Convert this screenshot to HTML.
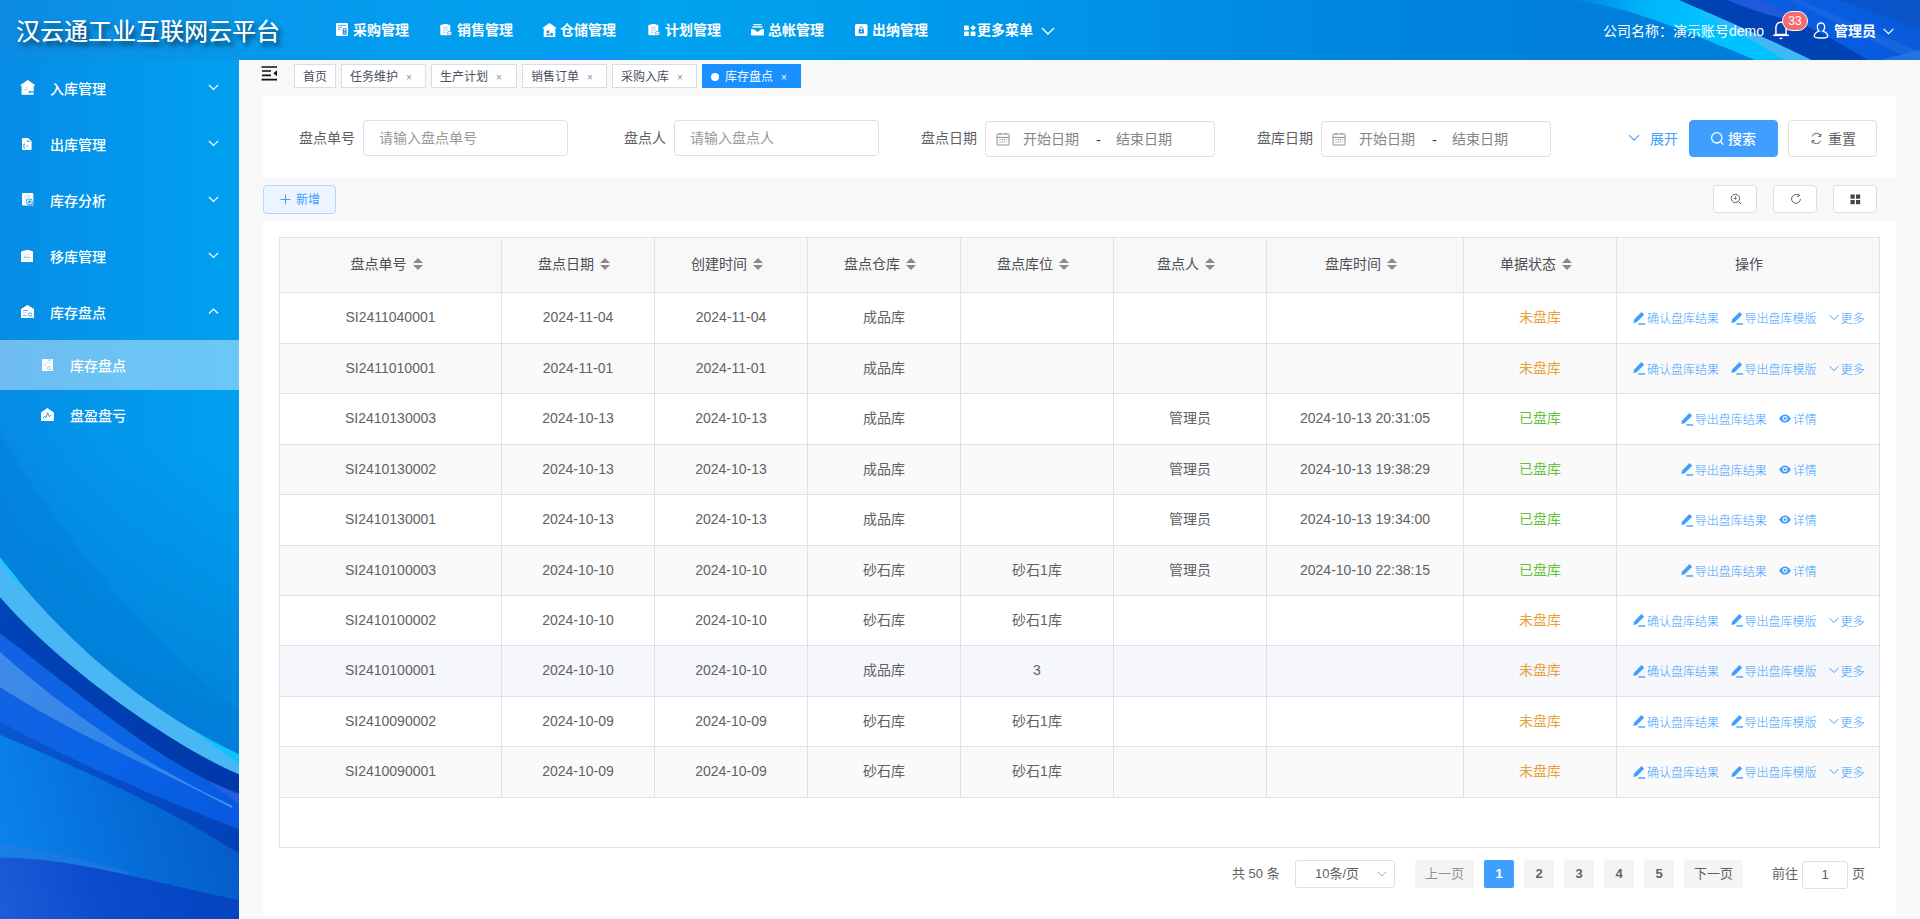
<!DOCTYPE html>
<html lang="zh-CN">
<head>
<meta charset="utf-8">
<title>汉云通工业互联网云平台</title>
<style>
*{box-sizing:border-box;margin:0;padding:0}
html,body{width:1920px;height:919px;overflow:hidden;background:#f8f8f8;font-family:"Liberation Sans","Noto Sans CJK SC",sans-serif;font-size:14px;color:#606266}
.abs{position:absolute}
svg{display:block}
/* header */
#hdr{position:absolute;left:0;top:0;width:1920px;height:60px;overflow:hidden;color:#fff}
#hdr .bg{position:absolute;left:0;top:0;width:1920px;height:60px}
#title{position:absolute;left:16px;top:0;height:60px;line-height:64px;font-size:24px;font-weight:400;color:#fff;text-shadow:3px 4px 5px rgba(0,0,0,.62), 0 0 0.6px #fff;white-space:nowrap}
.nav{position:absolute;top:0;height:60px;line-height:60px;font-size:14px;font-weight:bold;color:#fff;white-space:nowrap}
.nav svg{position:absolute;top:24px;left:0}
.nav span{position:absolute;left:17px;top:0}
/* sidebar */
#side{position:absolute;left:0;top:60px;width:239px;height:859px;overflow:hidden;color:#fff}
#side .bg{position:absolute;left:0;top:0;width:239px;height:859px}
.mi{position:absolute;left:0;width:239px;height:56px;line-height:58px;font-size:14px;font-weight:500;color:#fff}
.mi .t{position:absolute;left:50px;top:0;white-space:nowrap}
.mi .ic{position:absolute;left:20px;top:20px}
.mi .ar{position:absolute;left:208px;top:23.5px}
.smi{position:absolute;left:0;width:239px;height:50px;line-height:52px;font-size:14px;font-weight:500;color:#fff}
.smi .t{position:absolute;left:70px;top:0;white-space:nowrap}
.smi .ic{position:absolute;left:40px;top:17px}
/* tabs */
.tab{position:absolute;top:64px;height:24px;line-height:25px;border:1px solid #d8dce5;background:#fff;color:#495060;font-size:12px;padding:0 8px;white-space:nowrap}
.tab .x{display:inline-block;width:16px;margin-left:3px;text-align:center;font-size:10px;color:#8a8f99;position:relative;top:-0.5px}
.tab.on{background:#1890ff;border-color:#1890ff;color:#fff}
.tab.on .x{color:#fff}
.tab.on:before{content:"";display:inline-block;width:8px;height:8px;border-radius:50%;background:#fff;margin-right:6px;position:relative;top:0}
/* panels */
.panel{position:absolute;background:#fff}
.lbl{position:absolute;top:120px;height:36px;line-height:37px;font-size:14px;font-weight:400;color:#5c5e62;white-space:nowrap}
.inp{position:absolute;top:120px;height:36px;border:1px solid #dcdfe6;border-radius:4px;background:#fff;line-height:34px;font-size:14px;color:#999;padding-left:15px;white-space:nowrap}
.dr{position:absolute;top:121px;height:36px;width:230px;border:1px solid #dcdfe6;border-radius:4px;background:#fff;line-height:34px;font-size:14px;color:#858585;white-space:nowrap}
.dr span{position:absolute;top:0}
.btn{position:absolute;border-radius:4px;border:1px solid #dcdfe6;background:#fff;white-space:nowrap}
/* table */
#tb{position:absolute;left:279px;top:237px;width:1601px;height:611px;border:1px solid #dfe0e9;background:#fff}
.hr{position:absolute;left:0;top:0;width:1599px;height:55px;background:#f8f8f9;border-bottom:1px solid #dfe0e9}
.row{position:absolute;left:0;width:1599px;border-bottom:1px solid #dfe0e9}
.c{position:absolute;top:0;height:100%;border-right:1px solid #dfe0e9;text-align:center;font-size:14px;color:#606266;white-space:nowrap;display:flex;align-items:center;justify-content:center}
.c:last-child{border-right:none}
.row .c{padding-bottom:2px}
.row .c:last-child{padding-bottom:1px}
.row .c.z{padding-bottom:4px}
.hr .c{font-weight:400;color:#4c4e52;font-size:14px;padding-bottom:4px}
.st{display:inline-block;width:24px;height:14px;position:relative;top:2px;left:-1px}
.st:before{content:"";position:absolute;left:7px;top:0;border:5px solid transparent;border-bottom-color:#8a8a8a;border-top-width:0;border-bottom-width:5px}
.st:after{content:"";position:absolute;left:7px;top:7px;border:5px solid transparent;border-top-color:#8a8a8a;border-bottom-width:0;border-top-width:5px}
.a{color:#409eff;font-size:12px;font-weight:300;display:inline-flex;align-items:center}
.a svg{margin-right:2px}
.a+.a{margin-left:12px}
.s0{color:#e6a23c}.s1{color:#67c23a}
/* pagination */
.pg{position:absolute;top:860px;height:28px;line-height:28px;font-size:13px;color:#606266;white-space:nowrap;text-align:center}
.pb{background:#f4f4f5;border-radius:2px;font-weight:bold;width:30px}
</style>
</head>
<body>
<div id="hdr"><svg class="bg" viewBox="0 0 1920 60" preserveAspectRatio="none" width="1920" height="60">
<defs>
<linearGradient id="hg" x1="0" y1="0" x2="1920" y2="0" gradientUnits="userSpaceOnUse">
<stop offset="0" stop-color="#0c8ae3"/><stop offset="0.06" stop-color="#0a92e8"/><stop offset="0.2" stop-color="#049cee"/><stop offset="0.36" stop-color="#00a2ef"/><stop offset="0.5" stop-color="#0099eb"/><stop offset="0.66" stop-color="#008ae2"/><stop offset="0.8" stop-color="#0080dc"/><stop offset="1" stop-color="#007cd9"/>
</linearGradient>
<linearGradient id="hc" x1="1575" y1="0" x2="1700" y2="28" gradientUnits="userSpaceOnUse">
<stop offset="0" stop-color="#00b0f8" stop-opacity="0.15"/><stop offset="0.5" stop-color="#00bcfe" stop-opacity="0.85"/><stop offset="1" stop-color="#00c2ff"/>
</linearGradient>
<linearGradient id="hl" x1="1700" y1="12" x2="1750" y2="35" gradientUnits="userSpaceOnUse"><stop offset="0" stop-color="#10c0ff"/><stop offset="1" stop-color="#40b8f8"/></linearGradient>
<linearGradient id="hb" x1="1760" y1="0" x2="1920" y2="0" gradientUnits="userSpaceOnUse">
<stop offset="0" stop-color="#0a5ee2"/><stop offset="0.6" stop-color="#075ce0"/><stop offset="1" stop-color="#0a5ad8"/>
</linearGradient>
</defs>
<rect width="1920" height="60" fill="url(#hg)"/>
<path d="M1574.4,0.0 L1581.9,1.1 L1589.5,2.4 L1597.0,3.8 L1604.5,5.5 L1612.0,7.3 L1619.6,9.2 L1627.1,11.3 L1634.6,13.6 L1642.1,15.9 L1649.7,18.4 L1657.2,21.0 L1664.7,23.7 L1672.2,26.5 L1679.8,29.4 L1687.3,32.3 L1694.8,35.3 L1702.3,38.3 L1709.8,41.3 L1717.4,44.4 L1724.9,47.5 L1732.4,50.6 L1740.0,53.7 L1747.5,56.8 L1755.0,59.9 L1811.0,59.7 L1805.5,57.0 L1800.0,54.3 L1794.4,51.7 L1788.9,49.0 L1783.4,46.4 L1777.9,43.8 L1772.4,41.3 L1766.8,38.7 L1761.3,36.2 L1755.8,33.7 L1750.3,31.2 L1744.8,28.7 L1739.2,26.2 L1733.7,23.8 L1728.2,21.3 L1722.7,18.9 L1717.1,16.5 L1711.6,14.1 L1706.1,11.7 L1700.6,9.3 L1695.1,6.9 L1689.5,4.5 L1684.0,2.1 L1678.5,-0.2 Z" fill="url(#hc)"/>
<path d="M1700.0,15.5 L1703.5,16.9 L1707.0,18.4 L1710.5,19.9 L1714.0,21.4 L1717.5,23.0 L1721.0,24.6 L1724.5,26.3 L1728.0,28.0 L1731.5,29.7 L1735.0,31.5 L1738.5,33.3 L1742.0,35.1 L1745.5,37.0 L1749.0,38.9 L1752.5,40.8 L1756.0,42.8 L1759.5,44.8 L1763.0,46.8 L1766.5,48.9 L1770.0,51.0 L1773.5,53.2 L1777.0,55.4 L1780.5,57.6 L1784.0,59.8 L1811.0,59.7 L1805.5,57.0 L1800.0,54.3 L1794.4,51.7 L1788.9,49.0 L1783.4,46.4 L1777.9,43.8 L1772.4,41.3 L1766.8,38.7 L1761.3,36.2 L1755.8,33.7 L1750.3,31.2 L1744.8,28.7 L1739.2,26.2 L1733.7,23.8 L1728.2,21.3 L1722.7,18.9 L1717.1,16.5 L1711.6,14.1 L1706.1,11.7 L1700.6,9.3 Z" fill="url(#hl)"/>
<path d="M1678.5,-0.2 L1684.0,2.1 L1689.5,4.5 L1695.1,6.9 L1700.6,9.3 L1706.1,11.7 L1711.6,14.1 L1717.1,16.5 L1722.7,18.9 L1728.2,21.3 L1733.7,23.8 L1739.2,26.2 L1744.8,28.7 L1750.3,31.2 L1755.8,33.7 L1761.3,36.2 L1766.8,38.7 L1772.4,41.3 L1777.9,43.8 L1783.4,46.4 L1788.9,49.0 L1794.4,51.7 L1800.0,54.3 L1805.5,57.0 L1811.0,59.7 L1920.0,60.0 L1920.0,0.0 Z" fill="#0041b3"/>
<path d="M1727.5,-0.1 L1730.4,1.1 L1733.2,2.3 L1736.1,3.4 L1738.9,4.5 L1741.8,5.6 L1744.6,6.7 L1747.5,7.7 L1750.3,8.7 L1753.2,9.7 L1756.0,10.7 L1758.9,11.6 L1761.8,12.5 L1764.6,13.4 L1767.5,14.2 L1770.3,15.0 L1773.2,15.8 L1776.0,16.6 L1778.9,17.3 L1781.7,18.0 L1784.6,18.7 L1787.4,19.4 L1790.3,20.0 L1793.1,20.6 L1796.0,21.2 L1817.0,31.0 L1840.0,43.8 L1868.0,60.0 L1920.0,60.0 L1920.0,0.0 Z" fill="url(#hb)"/>
<path d="M1727.5,-0.1 L1730.4,1.1 L1733.2,2.3 L1736.1,3.4 L1738.9,4.5 L1741.8,5.6 L1744.6,6.7 L1747.5,7.7 L1750.3,8.7 L1753.2,9.7 L1756.0,10.7 L1758.9,11.6 L1761.8,12.5 L1764.6,13.4 L1767.5,14.2 L1770.3,15.0 L1773.2,15.8 L1776.0,16.6 L1778.9,17.3 L1781.7,18.0 L1784.6,18.7 L1787.4,19.4 L1790.3,20.0 L1793.1,20.6 L1796.0,21.2 L1800.0,18.9 L1798.2,18.0 L1796.5,17.1 L1794.7,16.2 L1793.0,15.3 L1791.2,14.4 L1789.4,13.6 L1787.7,12.8 L1785.9,11.9 L1784.1,11.1 L1782.4,10.3 L1780.6,9.5 L1778.8,8.7 L1777.1,7.9 L1775.3,7.2 L1773.6,6.4 L1771.8,5.6 L1770.0,4.9 L1768.3,4.2 L1766.5,3.5 L1764.8,2.8 L1763.0,2.1 L1761.2,1.4 L1759.5,0.7 L1757.7,0.0 Z" fill="#2059d9"/>
<path d="M1800.0,0.0 L1920.0,52.0 L1920.0,60.0 L1912.0,60.0 L1790.0,0.0 Z" fill="#2a7ae8" opacity="0.35"/>
<path d="M1840.0,0.0 L1920.0,30.0 L1920.0,0.0 Z" fill="#0a52c4" opacity="0.8"/>
<path d="M1880.0,60.0 L1920.0,50.0 L1920.0,60.0 Z" fill="#2a80e8" opacity="0.6"/>
</svg><div id="title">汉云通工业互联网云平台</div><div class="nav" style="left:336px"><svg width="12" height="13" viewBox="0 0 12 12.5" preserveAspectRatio="none" style="top:23px"><rect x="0" y="0" width="12" height="12.5" rx="1.2" fill="#fff"/><rect x="1.75" y="1.9" width="8.2" height="0.7" fill="#1a8fe6"/><rect x="1.75" y="3.75" width="4.4" height="0.7" fill="#1a8fe6"/><rect x="1.75" y="5.6" width="2.6" height="0.7" fill="#1a8fe6"/><rect x="6.75" y="5" width="3.8" height="6.4" rx="0.6" fill="#1a8fe6"/><circle cx="8.65" cy="6.6" r="0.9" fill="#fff"/><rect x="7.9" y="8.4" width="1.5" height="2.2" fill="#8ccaf5"/></svg><span>采购管理</span></div><div class="nav" style="left:440px"><svg width="12" height="11.5" viewBox="0 0 12 11.5" style="top:24px"><rect x="0.3" y="0.7" width="10" height="10.6" rx="1" fill="#fff"/><rect x="3" y="0" width="4.7" height="1.6" rx="0.6" fill="#fff"/><rect x="2.8" y="3.4" width="5.2" height="0.7" fill="#7cc3f4"/><rect x="2.8" y="5.6" width="5.2" height="0.7" fill="#7cc3f4"/><rect x="2.8" y="7.8" width="3.6" height="0.7" fill="#7cc3f4"/><circle cx="9.6" cy="9.3" r="2.4" fill="#0f97ec"/><circle cx="9.6" cy="9.3" r="1.9" fill="#fff"/><rect x="8.6" y="9" width="2" height="0.6" fill="#1a8fe6"/></svg><span>销售管理</span></div><div class="nav" style="left:543px"><svg width="15" height="14" viewBox="0 0 14 12" preserveAspectRatio="none" style="left:-1px;top:22.5px"><path d="M7,0 L14,4.6 L12.4,4.6 L12.4,12 L1.6,12 L1.6,4.6 L0,4.6 Z" fill="#fff"/><rect x="4.2" y="6.4" width="2.6" height="2.2" fill="#1a8fe6"/><rect x="7.6" y="8.6" width="2.6" height="2.2" fill="#1a8fe6"/><rect x="4.2" y="9.3" width="2.6" height="1.5" fill="#1a8fe6"/></svg><span>仓储管理</span></div><div class="nav" style="left:648px"><svg width="12" height="11.5" viewBox="0 0 12 11.5" style="top:24px"><rect x="0.3" y="0.7" width="10" height="10.6" rx="1" fill="#fff"/><rect x="3" y="0" width="4.7" height="1.6" rx="0.6" fill="#fff"/><rect x="2.8" y="3.4" width="5.2" height="0.7" fill="#7cc3f4"/><rect x="2.8" y="5.6" width="5.2" height="0.7" fill="#7cc3f4"/><rect x="2.8" y="7.8" width="3.6" height="0.7" fill="#7cc3f4"/><circle cx="9.6" cy="9.3" r="2.4" fill="#0f97ec"/><circle cx="9.6" cy="9.3" r="1.9" fill="#fff"/><rect x="8.6" y="9" width="2" height="0.6" fill="#1a8fe6"/></svg><span>计划管理</span></div><div class="nav" style="left:751px"><svg width="13" height="11.5" viewBox="0 0 13 11.5" style="top:24px"><rect x="2.4" y="0" width="8.2" height="1.3" fill="#fff"/><rect x="1.4" y="2.3" width="10.2" height="1.4" fill="#fff"/><path d="M0,5.2 L2.8,5.2 L6.5,7.9 L10.2,5.2 L13,5.2 L13,10.7 a0.8,0.8 0 0 1 -0.8,0.8 L0.8,11.5 a0.8,0.8 0 0 1 -0.8,-0.8 Z" fill="#fff"/></svg><span>总帐管理</span></div><div class="nav" style="left:855px"><svg width="12.5" height="12" viewBox="0 0 12.5 12" style="top:23.5px"><rect x="0" y="0" width="12.5" height="12" rx="1.6" fill="#fff"/><path d="M4.6,5.4 V4.5 a1.65,1.65 0 0 1 3.3,0 V5.4" stroke="#1a8fe6" stroke-width="0.9" fill="none"/><rect x="3.6" y="5.2" width="5.3" height="4.2" rx="0.6" fill="#1a8fe6"/><circle cx="6.25" cy="7.3" r="0.8" fill="#fff"/></svg><span>出纳管理</span></div><div class="abs" style="left:538px;top:57px;width:84px;height:3px;background:#1890ff"></div><div class="nav" style="left:964px"><svg width="12" height="11.5" viewBox="0 0 12 11.5" style="top:24.5px"><rect x="0" y="0.4" width="4.8" height="4.8" rx="0.6" fill="#fff"/><path d="M9.1,0 L11.9,2.8 L9.1,5.6 L6.3,2.8 Z" fill="#fff"/><rect x="0" y="6.5" width="4.8" height="4.8" rx="0.6" fill="#fff"/><rect x="6.6" y="6.5" width="4.8" height="4.8" rx="0.6" fill="#fff"/></svg><span style="left:13px">更多菜单</span><svg width="14" height="8" viewBox="0 0 14 8" style="left:77px;top:27px"><path d="M1,1 L7,7 L13,1" stroke="#fff" stroke-width="1.4" fill="none"/></svg></div><div class="abs" style="left:1603px;top:0;height:60px;line-height:62px;font-size:14px;color:#fff;white-space:nowrap">公司名称：演示账号demo</div><svg class="abs" style="left:1772px;top:21px" width="18" height="20" viewBox="0 0 18 20"><path d="M9,1.2 C5.6,1.2 3.9,3.8 3.9,6.8 L3.9,13.6 L14.1,13.6 L14.1,6.8 C14.1,3.8 12.4,1.2 9,1.2 Z" fill="none" stroke="#fff" stroke-width="1.5"/><path d="M1.2,14.3 H16.8" stroke="#fff" stroke-width="1.6"/><path d="M7.6,17.4 H10.4" stroke="#fff" stroke-width="1.4"/></svg><div class="abs" style="left:1782px;top:11px;width:26px;height:20px;border-radius:10px;background:#f56c6c;border:1px solid #fff;color:#fff;font-size:12px;line-height:18px;text-align:center">33</div><svg class="abs" style="left:1813px;top:22px" width="16" height="17" viewBox="0 0 16 17"><path d="M8,1 C5.6,1 4.3,2.9 4.3,5 C4.3,6.8 5,8.3 6.2,9.2 C3.4,10 1.4,11.6 1.2,14.2 C1.2,15.3 3.6,16 8,16 C12.4,16 14.8,15.3 14.8,14.2 C14.6,11.6 12.6,10 9.8,9.2 C11,8.3 11.7,6.8 11.7,5 C11.7,2.9 10.4,1 8,1 Z" fill="none" stroke="#fff" stroke-width="1.3"/></svg><div class="abs" style="left:1834px;top:0;height:60px;line-height:62px;font-size:14px;font-weight:bold;color:#fff;white-space:nowrap">管理员</div><svg class="abs" style="left:1883px;top:28px" width="11" height="7" viewBox="0 0 11 7"><path d="M0.6,0.8 L5.5,5.7 L10.4,0.8" stroke="#fff" stroke-width="1.2" fill="none"/></svg></div>
<div id="side"><svg class="bg" viewBox="0 0 239 859" preserveAspectRatio="none" width="239" height="859">
<defs>
<linearGradient id="sg" x1="0" y1="0" x2="239" y2="0" gradientUnits="userSpaceOnUse">
<stop offset="0" stop-color="#078ce5"/><stop offset="0.4" stop-color="#0396eb"/><stop offset="1" stop-color="#00a0f0"/>
</linearGradient>
<linearGradient id="sv" x1="225" y1="400" x2="165" y2="700" gradientUnits="userSpaceOnUse">
<stop offset="0" stop-color="#0078d2" stop-opacity="0"/><stop offset="0.5" stop-color="#0078d2" stop-opacity="0.4"/><stop offset="1" stop-color="#0078d4" stop-opacity="0.85"/>
</linearGradient>
<linearGradient id="sm" x1="0" y1="580" x2="239" y2="780" gradientUnits="userSpaceOnUse">
<stop offset="0" stop-color="#1262e2"/><stop offset="0.5" stop-color="#0a64e6"/><stop offset="1" stop-color="#0658e0"/>
</linearGradient>
<linearGradient id="ss" x1="0" y1="600" x2="239" y2="745" gradientUnits="userSpaceOnUse"><stop offset="0" stop-color="#3f8ae8"/><stop offset="0.6" stop-color="#2f84e8"/><stop offset="1" stop-color="#4a98f0"/></linearGradient>
<linearGradient id="sk" x1="0" y1="550" x2="239" y2="725" gradientUnits="userSpaceOnUse"><stop offset="0" stop-color="#0044b8"/><stop offset="1" stop-color="#0038aa"/></linearGradient>
<linearGradient id="sd" x1="0" y1="665" x2="239" y2="790" gradientUnits="userSpaceOnUse">
<stop offset="0" stop-color="#0a58ce"/><stop offset="0.5" stop-color="#054cc4"/><stop offset="1" stop-color="#0340b8"/>
</linearGradient>
<linearGradient id="sb" x1="0" y1="760" x2="239" y2="700" gradientUnits="userSpaceOnUse">
<stop offset="0" stop-color="#0a82ea"/><stop offset="0.5" stop-color="#066cd8"/><stop offset="1" stop-color="#0458c4"/>
</linearGradient>
<linearGradient id="sbb" x1="0" y1="859" x2="200" y2="800" gradientUnits="userSpaceOnUse">
<stop offset="0" stop-color="#1e5cd8"/><stop offset="0.5" stop-color="#0a4ccc"/><stop offset="1" stop-color="#0545c2"/>
</linearGradient>
</defs>
<rect width="239" height="859" fill="url(#sg)"/>
<rect width="239" height="859" fill="url(#sv)"/>
<path d="M0,370 C20,410 55,460 89,500 C120,540 160,590 239,650 L239,700 L0,700 Z" fill="#0078d4" opacity="0.28"/>
<path d="M0.0,573.5 L8.0,579.5 L15.9,585.5 L23.9,591.6 L31.9,597.8 L39.8,604.0 L47.8,610.2 L55.8,616.4 L63.7,622.6 L71.7,628.8 L79.7,635.0 L87.6,641.2 L95.6,647.2 L103.6,653.3 L111.5,659.2 L119.5,665.1 L127.5,670.8 L135.4,676.5 L143.4,682.0 L151.4,687.4 L159.3,692.6 L167.3,697.7 L175.3,702.5 L183.2,707.2 L191.2,711.7 L199.2,715.9 L207.1,720.0 L215.1,723.7 L223.1,727.3 L231.0,730.5 L239.0,733.5 L239.0,859.0 L0.0,859.0 Z" fill="url(#sm)"/>
<path d="M0.0,592.0 L7.7,598.8 L15.5,605.5 L23.2,612.0 L30.9,618.4 L38.7,624.7 L46.4,630.9 L54.1,636.9 L61.9,642.8 L69.6,648.6 L77.3,654.3 L85.1,659.8 L92.8,665.3 L100.5,670.6 L108.3,675.8 L116.0,680.9 L123.7,685.9 L131.5,690.8 L139.2,695.6 L146.9,700.3 L154.7,704.9 L162.4,709.4 L170.1,713.8 L177.9,718.1 L185.6,722.3 L193.3,726.4 L201.1,730.4 L208.8,734.4 L216.5,738.2 L224.3,742.0 L232.0,745.7 L232.0,748.1 L224.3,744.0 L216.5,739.9 L208.8,736.0 L201.1,732.0 L193.3,728.2 L185.6,724.3 L177.9,720.5 L170.1,716.8 L162.4,713.0 L154.7,709.3 L146.9,705.6 L139.2,701.9 L131.5,698.2 L123.7,694.5 L116.0,690.7 L108.3,686.9 L100.5,683.1 L92.8,679.3 L85.1,675.4 L77.3,671.4 L69.6,667.4 L61.9,663.3 L54.1,659.1 L46.4,654.8 L38.7,650.5 L30.9,646.0 L23.2,641.5 L15.5,636.8 L7.7,632.0 L0.0,627.0 Z" fill="url(#ss)"/>
<path d="M0.0,674.4 L8.0,677.9 L15.9,681.3 L23.9,684.8 L31.9,688.3 L39.8,691.8 L47.8,695.3 L55.8,698.8 L63.7,702.3 L71.7,705.9 L79.7,709.5 L87.6,713.1 L95.6,716.8 L103.6,720.4 L111.5,724.2 L119.5,728.0 L127.5,731.8 L135.4,735.7 L143.4,739.7 L151.4,743.7 L159.3,747.8 L167.3,752.0 L175.3,756.2 L183.2,760.5 L191.2,765.0 L199.2,769.5 L207.1,774.1 L215.1,778.8 L223.1,783.6 L231.0,788.5 L239.0,793.5 L239.0,859.0 L0.0,859.0 Z" fill="url(#sb)"/>
<path d="M0.0,661.5 L8.0,665.9 L15.9,670.2 L23.9,674.4 L31.9,678.5 L39.8,682.6 L47.8,686.6 L55.8,690.5 L63.7,694.4 L71.7,698.2 L79.7,702.0 L87.6,705.7 L95.6,709.4 L103.6,713.0 L111.5,716.6 L119.5,720.1 L127.5,723.6 L135.4,727.1 L143.4,730.5 L151.4,733.9 L159.3,737.2 L167.3,740.6 L175.3,743.9 L183.2,747.1 L191.2,750.4 L199.2,753.6 L207.1,756.9 L215.1,760.1 L223.1,763.3 L231.0,766.4 L239.0,769.6 L239.0,793.5 L231.0,788.5 L223.1,783.6 L215.1,778.8 L207.1,774.1 L199.2,769.5 L191.2,765.0 L183.2,760.5 L175.3,756.2 L167.3,752.0 L159.3,747.8 L151.4,743.7 L143.4,739.7 L135.4,735.7 L127.5,731.8 L119.5,728.0 L111.5,724.2 L103.6,720.4 L95.6,716.8 L87.6,713.1 L79.7,709.5 L71.7,705.9 L63.7,702.3 L55.8,698.8 L47.8,695.3 L39.8,691.8 L31.9,688.3 L23.9,684.8 L15.9,681.3 L8.0,677.9 L0.0,674.4 Z" fill="url(#sd)"/>
<path d="M0.0,537.2 L8.0,546.0 L15.9,554.5 L23.9,562.6 L31.9,570.4 L39.8,578.0 L47.8,585.3 L55.8,592.4 L63.7,599.3 L71.7,606.0 L79.7,612.6 L87.6,618.9 L95.6,625.2 L103.6,631.2 L111.5,637.2 L119.5,643.0 L127.5,648.7 L135.4,654.3 L143.4,659.7 L151.4,665.1 L159.3,670.3 L167.3,675.4 L175.3,680.3 L183.2,685.2 L191.2,689.9 L199.2,694.4 L207.1,698.7 L215.1,702.9 L223.1,706.9 L231.0,710.7 L239.0,714.2 L239.0,733.5 L231.0,730.5 L223.1,727.3 L215.1,723.7 L207.1,720.0 L199.2,715.9 L191.2,711.7 L183.2,707.2 L175.3,702.5 L167.3,697.7 L159.3,692.6 L151.4,687.4 L143.4,682.0 L135.4,676.5 L127.5,670.8 L119.5,665.1 L111.5,659.2 L103.6,653.3 L95.6,647.2 L87.6,641.2 L79.7,635.0 L71.7,628.8 L63.7,622.6 L55.8,616.4 L47.8,610.2 L39.8,604.0 L31.9,597.8 L23.9,591.6 L15.9,585.5 L8.0,579.5 L0.0,573.5 Z" fill="url(#sk)"/>
<path d="M208.7,721.3 L239,735 L239,744 Z" fill="#2a5ee0"/>
<path d="M0.0,497.4 L8.0,507.7 L15.9,517.6 L23.9,527.2 L31.9,536.4 L39.8,545.3 L47.8,553.9 L55.8,562.3 L63.7,570.3 L71.7,578.1 L79.7,585.6 L87.6,592.9 L95.6,599.9 L103.6,606.7 L111.5,613.3 L119.5,619.7 L127.5,625.9 L135.4,631.9 L143.4,637.7 L151.4,643.3 L159.3,648.8 L167.3,654.1 L175.3,659.2 L183.2,664.2 L191.2,669.0 L199.2,673.6 L207.1,678.1 L215.1,682.4 L223.1,686.6 L231.0,690.6 L239.0,694.5 L239.0,714.2 L231.0,710.7 L223.1,706.9 L215.1,702.9 L207.1,698.7 L199.2,694.4 L191.2,689.9 L183.2,685.2 L175.3,680.3 L167.3,675.4 L159.3,670.3 L151.4,665.1 L143.4,659.7 L135.4,654.3 L127.5,648.7 L119.5,643.0 L111.5,637.2 L103.6,631.2 L95.6,625.2 L87.6,618.9 L79.7,612.6 L71.7,606.0 L63.7,599.3 L55.8,592.4 L47.8,585.3 L39.8,578.0 L31.9,570.4 L23.9,562.6 L15.9,554.5 L8.0,546.0 L0.0,537.2 Z" fill="#49b7f4"/>
<path d="M191.2,669.0 L199.2,673.6 L207.1,678.1 L215.1,682.4 L223.1,686.6 L231.0,690.6 L239.0,694.5 L239.0,703.4 L231.0,697.7 L223.1,692.0 L215.1,686.3 L207.1,680.6 L199.2,674.9 L191.2,669.2 Z" fill="#08c4ff"/>
<path d="M0,497.8 L0,503 L22,530 L17.4,518.7 Z" fill="#20c4ff"/>
<path d="M0.0,782.0 L10.0,784.0 L20.0,786.0 L30.0,788.1 L40.0,790.3 L50.0,792.5 L60.0,794.8 L70.0,797.1 L80.0,799.5 L90.0,801.9 L100.0,804.4 L110.0,807.0 L120.0,809.6 L130.0,812.3 L127.5,814.9 L119.5,813.1 L111.5,811.5 L103.6,809.8 L95.6,808.3 L87.6,806.8 L79.7,805.4 L71.7,804.1 L63.7,802.8 L55.8,801.7 L47.8,800.7 L39.8,799.8 L31.9,799.1 L23.9,798.5 L15.9,798.0 L8.0,797.7 L0.0,797.6 Z" fill="#2a7ae4" opacity="0.5"/>
<path d="M0.0,797.6 L8.0,797.7 L15.9,798.0 L23.9,798.5 L31.9,799.1 L39.8,799.8 L47.8,800.7 L55.8,801.7 L63.7,802.8 L71.7,804.1 L79.7,805.4 L87.6,806.8 L95.6,808.3 L103.6,809.8 L111.5,811.5 L119.5,813.1 L127.5,814.9 L135.4,816.7 L143.4,818.5 L151.4,820.3 L159.3,822.2 L167.3,824.0 L175.3,825.9 L183.2,827.8 L191.2,829.6 L199.2,831.4 L207.1,833.2 L215.1,835.0 L223.1,836.7 L231.0,838.4 L239.0,840.0 L239.0,859.0 L0.0,859.0 Z" fill="url(#sbb)"/>
</svg><div class="mi" style="top:0px"><svg class="ic" width="15.4" height="14.8" viewBox="0 0 15.4 14.8" style="left:19.5px;top:20.2px"><path d="M7.8,0 L15.3,5.3 L13.7,6 L13.7,14.7 L1.6,14.7 L1.6,6 L0.1,5.3 Z" fill="#fff"/><rect x="9.3" y="11.3" width="4.4" height="1.3" fill="#1290e6"/><path d="M8.3,11.95 L9.9,10.5 L9.9,13.4 Z" fill="#1290e6"/><rect x="4.6" y="9.4" width="1" height="0.8" fill="#1290e6"/><rect x="6.6" y="9.4" width="1" height="0.8" fill="#1290e6"/><rect x="4.6" y="7.5" width="3" height="0.7" fill="#b4dcf8"/></svg><span class="t">入库管理</span><svg class="ar" width="11" height="7" viewBox="0 0 11 7"><path d="M1,1 L5.5,5.5 L10,1" stroke="#fff" stroke-width="1.2" fill="none"/></svg></div><div class="mi" style="top:56px"><svg class="ic" width="9.6" height="12" viewBox="0 0 9.6 12" style="left:22.3px;top:22px"><path d="M1,0 L6.2,0 L9.6,3.4 L9.6,11 a1,1 0 0 1 -1,1 L1,12 a1,1 0 0 1 -1,-1 L0,1 a1,1 0 0 1 1,-1 Z" fill="#fff"/><path d="M5.5,1.8 L7.9,3.9 L5.5,3.9 Z" fill="#1290e6"/><path d="M3.4,6.2 H1.9 V9.9 H3.4" stroke="#1290e6" stroke-width="0.8" fill="none"/><rect x="3.9" y="7.3" width="2.9" height="1.3" fill="#8ccaf5"/></svg><span class="t">出库管理</span><svg class="ar" width="11" height="7" viewBox="0 0 11 7"><path d="M1,1 L5.5,5.5 L10,1" stroke="#fff" stroke-width="1.2" fill="none"/></svg></div><div class="mi" style="top:112px"><svg class="ic" width="12" height="13.4" viewBox="0 0 12 13.4" style="left:21.5px;top:21.3px"><rect x="0" y="0" width="11.4" height="12.6" rx="1.3" fill="#fff"/><rect x="2.3" y="2.7" width="6.9" height="0.6" fill="#9ad0f6"/><rect x="2.3" y="4.7" width="3.7" height="0.6" fill="#9ad0f6"/><rect x="2.3" y="6.7" width="2.3" height="0.6" fill="#9ad0f6"/><rect x="2.3" y="8.7" width="1.9" height="0.6" fill="#9ad0f6"/><path d="M9.3,10.8 L11.8,13.2" stroke="#0d92e8" stroke-width="2.6"/><circle cx="7.35" cy="8.8" r="3.2" fill="#0d92e8"/><circle cx="7.35" cy="8.8" r="2.5" fill="#fff"/><circle cx="7.35" cy="8.8" r="1.4" fill="#0d92e8"/><path d="M9.1,10.6 L11.3,12.7" stroke="#fff" stroke-width="1"/></svg><span class="t">库存分析</span><svg class="ar" width="11" height="7" viewBox="0 0 11 7"><path d="M1,1 L5.5,5.5 L10,1" stroke="#fff" stroke-width="1.2" fill="none"/></svg></div><div class="mi" style="top:168px"><svg class="ic" width="12.4" height="11.9" viewBox="0 0 12.4 11.9" style="left:21.1px;top:22.1px"><path d="M0,3.2 a2.6,2.4 0 0 1 2.6,-2.4 L9.8,0.8 a2.6,2.4 0 0 1 2.6,2.4 L12.4,11.2 a0.7,0.7 0 0 1 -0.7,0.7 L0.7,11.9 a0.7,0.7 0 0 1 -0.7,-0.7 Z" fill="#fff"/><rect x="3.9" y="0" width="5.2" height="1.6" rx="0.7" fill="#fff"/><rect x="3" y="4.3" width="6.6" height="0.6" fill="#c4e4fa"/><path d="M3.2,7.4 H9.5 M3.2,7.4 L4.8,5.9" stroke="#5ab0f0" stroke-width="0.8" fill="none"/><rect x="3" y="9" width="5" height="0.6" fill="#c4e4fa"/><path d="M7.3,10.4 L8.4,9.3" stroke="#5ab0f0" stroke-width="0.7"/></svg><span class="t">移库管理</span><svg class="ar" width="11" height="7" viewBox="0 0 11 7"><path d="M1,1 L5.5,5.5 L10,1" stroke="#fff" stroke-width="1.2" fill="none"/></svg></div><div class="mi" style="top:224px"><svg class="ic" width="13" height="12.9" viewBox="0 0 13 12.9" style="left:20.8px;top:21.1px"><path d="M6.5,0 L13,3.9 L13,12.9 L0,12.9 L0,3.9 Z" fill="#fff"/><rect x="2.1" y="5.1" width="5.1" height="0.8" fill="#2a98ea"/><rect x="2.1" y="7.2" width="3.1" height="0.7" fill="#9ad0f6"/><rect x="2" y="9.9" width="3.2" height="0.8" fill="#2a98ea"/><circle cx="9.1" cy="9.5" r="1.7" fill="#fff" stroke="#2a98ea" stroke-width="0.8"/><path d="M10.4,10.8 L11.6,12" stroke="#2a98ea" stroke-width="0.8"/></svg><span class="t">库存盘点</span><svg class="ar" width="11" height="7" viewBox="0 0 11 7"><path d="M1,5.5 L5.5,1 L10,5.5" stroke="#fff" stroke-width="1.2" fill="none"/></svg></div><div class="smi" style="top:280px;background:rgba(255,255,255,.42)"><svg class="ic" width="10.9" height="12.1" viewBox="0 0 10.9 12.1" style="top:18.8px;left:42px"><rect x="0" y="0" width="10.9" height="12.1" rx="0.7" fill="#fff"/><rect x="6.4" y="0" width="1.9" height="2.6" fill="#9ed6f8"/><rect x="1.5" y="4.4" width="6.1" height="0.5" fill="#a8d8f7"/><rect x="1.8" y="6.2" width="2" height="0.6" fill="#7cc3f4"/><circle cx="7" cy="9" r="1.6" fill="#fff" stroke="#7cc3f4" stroke-width="0.7"/><path d="M8.2,10.2 L9.3,11.3" stroke="#7cc3f4" stroke-width="0.7"/></svg><span class="t">库存盘点</span></div><div class="smi" style="top:330px"><svg class="ic" width="12.9" height="13.2" viewBox="0 0 12.9 13.2" style="top:17.8px;left:40.8px"><path d="M6.4,0 L12.9,4.4 L12.9,12.2 a1,1 0 0 1 -1,1 L1,13.2 a1,1 0 0 1 -1,-1 L0,4.4 Z" fill="#fff"/><path d="M2.3,9.8 L3.6,8.2 L4.9,9.8 L6.7,4.7 L8.5,8.8 L10.1,7.2" stroke="#1290e6" stroke-width="0.9" fill="none" stroke-linejoin="round" stroke-linecap="round"/></svg><span class="t">盘盈盘亏</span></div></div>
<svg class="abs" style="left:261px;top:66px" width="17" height="15" viewBox="0 0 17 15"><path d="M0.5,1 H16 M1,5 H10 M1,9.4 H10 M0.5,13.6 H16" stroke="#111" stroke-width="1.6" fill="none"/><path d="M16,4.2 L12.4,7.2 L16,10.2 Z" fill="#111"/></svg><div class="tab" style="left:294px;width:42px">首页</div><div class="tab" style="left:341px;width:85px">任务维护<span class="x">×</span></div><div class="tab" style="left:431px;width:86px">生产计划<span class="x">×</span></div><div class="tab" style="left:522px;width:85px">销售订单<span class="x">×</span></div><div class="tab" style="left:612px;width:85px">采购入库<span class="x">×</span></div><div class="tab on" style="left:702px;width:99px">库存盘点<span class="x">×</span></div>
<div class="panel" style="left:263px;top:96px;width:1633px;height:81px"></div><div class="lbl" style="left:299px">盘点单号</div><div class="inp" style="left:363px;width:205px">请输入盘点单号</div><div class="lbl" style="left:624px">盘点人</div><div class="inp" style="left:674px;width:205px">请输入盘点人</div><div class="lbl" style="left:921px">盘点日期</div><div class="dr" style="left:985px"><svg class="abs" style="left:10px;top:10px" width="14" height="14" viewBox="0 0 14 14"><rect x="1" y="2" width="12" height="11" rx="0.4" fill="none" stroke="#8d9095" stroke-width="1"/><path d="M1,5.4 H13 M4,0.8 V3 M10,0.8 V3" stroke="#8d9095" stroke-width="1"/><path d="M3.4,7.6 H10.6 M3.4,10 H10.6" stroke="#8d9095" stroke-width="1" stroke-dasharray="1.2 1"/></svg><span style="left:37px">开始日期</span><span style="left:110px;top:1px;color:#303133">-</span><span style="left:130px">结束日期</span></div><div class="lbl" style="left:1257px">盘库日期</div><div class="dr" style="left:1321px"><svg class="abs" style="left:10px;top:10px" width="14" height="14" viewBox="0 0 14 14"><rect x="1" y="2" width="12" height="11" rx="0.4" fill="none" stroke="#8d9095" stroke-width="1"/><path d="M1,5.4 H13 M4,0.8 V3 M10,0.8 V3" stroke="#8d9095" stroke-width="1"/><path d="M3.4,7.6 H10.6 M3.4,10 H10.6" stroke="#8d9095" stroke-width="1" stroke-dasharray="1.2 1"/></svg><span style="left:37px">开始日期</span><span style="left:110px;top:1px;color:#303133">-</span><span style="left:130px">结束日期</span></div><svg class="abs" style="left:1628px;top:134px" width="12" height="8" viewBox="0 0 12 8"><path d="M1,1.2 L6,6.2 L11,1.2" stroke="#409eff" stroke-width="1.1" fill="none"/></svg><div class="abs" style="left:1650px;top:120px;line-height:38px;font-size:14px;color:#409eff">展开</div><div class="btn" style="left:1689px;top:120px;width:89px;height:37px;background:#409eff;border-color:#409eff"><svg class="abs" style="left:20px;top:10px" width="15" height="15" viewBox="0 0 15 15"><circle cx="6.8" cy="6.8" r="5.2" fill="none" stroke="#fff" stroke-width="1.3"/><path d="M10.6,10.8 L13.4,13.6" stroke="#fff" stroke-width="1.3"/></svg><span class="abs" style="left:38px;top:0;line-height:37px;font-size:14px;font-weight:500;color:#fff">搜索</span></div><div class="btn" style="left:1788px;top:120px;width:89px;height:37px"><svg class="abs" style="left:21px;top:11px" width="13" height="13" viewBox="0 0 13 13"><path d="M2.2,4.4 A4.6,4.6 0 0 1 10.8,4.2 M10.8,8.6 A4.6,4.6 0 0 1 2.2,8.8" stroke="#606266" stroke-width="1" fill="none"/><path d="M10.9,1.6 V4.4 H8.2 M2.1,11.4 V8.6 H4.8" stroke="#606266" stroke-width="1" fill="none"/></svg><span class="abs" style="left:39px;top:0;line-height:37px;font-size:14px;color:#606266">重置</span></div><div class="btn" style="left:263px;top:185px;width:73px;height:29px;background:#ecf5ff;border-color:#b3d8ff"><svg class="abs" style="left:16px;top:8px" width="11" height="11" viewBox="0 0 11 11"><path d="M5.5,0.5 V10.5 M0.5,5.5 H10.5" stroke="#409eff" stroke-width="1"/></svg><span class="abs" style="left:32px;top:0;line-height:29px;font-size:12px;color:#409eff">新增</span></div><div class="btn" style="left:1713px;top:185px;width:44px;height:28px"><svg class="abs" style="left:16px;top:7px" width="12" height="12" viewBox="0 0 12 12"><circle cx="5.4" cy="5.4" r="4.2" fill="none" stroke="#606266" stroke-width="1"/><path d="M8.6,8.6 L11,11" stroke="#606266" stroke-width="1"/><path d="M5.4,3.2 V6 M4,5 l1.4,1.4 l1.4,-1.4" stroke="#606266" stroke-width="0.9" fill="none"/></svg></div><div class="btn" style="left:1773px;top:185px;width:44px;height:28px"><svg class="abs" style="left:16px;top:7px" width="12" height="12" viewBox="0 0 12 12"><path d="M10.4,6 A4.4,4.4 0 1 1 8.6,2.4" stroke="#606266" stroke-width="1" fill="none"/><path d="M8,0.6 L9.6,2.6 L7.2,3.6" stroke="#606266" stroke-width="1" fill="none"/></svg></div><div class="btn" style="left:1833px;top:185px;width:44px;height:28px"><svg class="abs" style="left:16px;top:8px" width="11" height="11" viewBox="0 0 11 11"><rect x="0.5" y="0.5" width="4.2" height="4.2" fill="#444"/><rect x="6" y="0.5" width="4.2" height="4.2" fill="#444"/><rect x="0.5" y="6" width="4.2" height="4.2" fill="#444"/><rect x="6" y="6" width="4.2" height="4.2" fill="#444"/></svg></div>
<div class="panel" style="left:263px;top:221px;width:1633px;height:695px"></div><div id="tb"><div class="hr"><div class="c" style="left:0px;width:222px">盘点单号<i class="st"></i></div><div class="c" style="left:222px;width:153px">盘点日期<i class="st"></i></div><div class="c" style="left:375px;width:153px">创建时间<i class="st"></i></div><div class="c" style="left:528px;width:153px">盘点仓库<i class="st"></i></div><div class="c" style="left:681px;width:153px">盘点库位<i class="st"></i></div><div class="c" style="left:834px;width:153px">盘点人<i class="st"></i></div><div class="c" style="left:987px;width:197px">盘库时间<i class="st"></i></div><div class="c" style="left:1184px;width:153px">单据状态<i class="st"></i></div><div class="c" style="left:1337px;width:264px">操作</div></div><div class="row" style="top:55px;height:51px;background:#fff"><div class="c" style="left:0px;width:222px">SI2411040001</div><div class="c" style="left:222px;width:153px">2024-11-04</div><div class="c" style="left:375px;width:153px">2024-11-04</div><div class="c z" style="left:528px;width:153px">成品库</div><div class="c" style="left:681px;width:153px"></div><div class="c" style="left:834px;width:153px"></div><div class="c" style="left:987px;width:197px"></div><div class="c z" style="left:1184px;width:153px"><span class="s0">未盘库</span></div><div class="c" style="left:1337px;width:264px"><span class="a"><svg width="14" height="14" viewBox="1.5 0.2 12 12.3" style="margin-right:-0.5px"><path d="M8.8,1 L11.2,3.4 L4.6,10 L1.6,10.8 L2.4,7.6 Z" fill="#409eff"/><path d="M6,11.6 H12" stroke="#409eff" stroke-width="1.2"/></svg>确认盘库结果</span><span class="a"><svg width="14" height="14" viewBox="1.5 0.2 12 12.3" style="margin-right:-0.5px"><path d="M8.8,1 L11.2,3.4 L4.6,10 L1.6,10.8 L2.4,7.6 Z" fill="#409eff"/><path d="M6,11.6 H12" stroke="#409eff" stroke-width="1.2"/></svg>导出盘库模版</span><span class="a"><svg width="10" height="11" viewBox="0.5 0 10 11"><path d="M1,3 L5.5,7.5 L10,3" stroke="#409eff" stroke-width="1" fill="none"/></svg>更多</span></div></div><div class="row" style="top:106px;height:50px;background:#fafafa"><div class="c" style="left:0px;width:222px">SI2411010001</div><div class="c" style="left:222px;width:153px">2024-11-01</div><div class="c" style="left:375px;width:153px">2024-11-01</div><div class="c z" style="left:528px;width:153px">成品库</div><div class="c" style="left:681px;width:153px"></div><div class="c" style="left:834px;width:153px"></div><div class="c" style="left:987px;width:197px"></div><div class="c z" style="left:1184px;width:153px"><span class="s0">未盘库</span></div><div class="c" style="left:1337px;width:264px"><span class="a"><svg width="14" height="14" viewBox="1.5 0.2 12 12.3" style="margin-right:-0.5px"><path d="M8.8,1 L11.2,3.4 L4.6,10 L1.6,10.8 L2.4,7.6 Z" fill="#409eff"/><path d="M6,11.6 H12" stroke="#409eff" stroke-width="1.2"/></svg>确认盘库结果</span><span class="a"><svg width="14" height="14" viewBox="1.5 0.2 12 12.3" style="margin-right:-0.5px"><path d="M8.8,1 L11.2,3.4 L4.6,10 L1.6,10.8 L2.4,7.6 Z" fill="#409eff"/><path d="M6,11.6 H12" stroke="#409eff" stroke-width="1.2"/></svg>导出盘库模版</span><span class="a"><svg width="10" height="11" viewBox="0.5 0 10 11"><path d="M1,3 L5.5,7.5 L10,3" stroke="#409eff" stroke-width="1" fill="none"/></svg>更多</span></div></div><div class="row" style="top:156px;height:51px;background:#fff"><div class="c" style="left:0px;width:222px">SI2410130003</div><div class="c" style="left:222px;width:153px">2024-10-13</div><div class="c" style="left:375px;width:153px">2024-10-13</div><div class="c z" style="left:528px;width:153px">成品库</div><div class="c" style="left:681px;width:153px"></div><div class="c z" style="left:834px;width:153px">管理员</div><div class="c" style="left:987px;width:197px">2024-10-13 20:31:05</div><div class="c z" style="left:1184px;width:153px"><span class="s1">已盘库</span></div><div class="c" style="left:1337px;width:264px"><span class="a"><svg width="14" height="14" viewBox="1.5 0.2 12 12.3" style="margin-right:-0.5px"><path d="M8.8,1 L11.2,3.4 L4.6,10 L1.6,10.8 L2.4,7.6 Z" fill="#409eff"/><path d="M6,11.6 H12" stroke="#409eff" stroke-width="1.2"/></svg>导出盘库结果</span><span class="a"><svg width="12" height="13" viewBox="0.5 0 12 13"><path d="M0.6,6.5 C2.4,3.4 4.4,2.4 6.5,2.4 C8.6,2.4 10.6,3.4 12.4,6.5 C10.6,9.6 8.6,10.6 6.5,10.6 C4.4,10.6 2.4,9.6 0.6,6.5 Z" fill="#409eff"/><circle cx="6.5" cy="6.5" r="2.4" fill="#fff"/><circle cx="6.5" cy="6.5" r="1.3" fill="#409eff"/></svg>详情</span></div></div><div class="row" style="top:207px;height:50px;background:#fafafa"><div class="c" style="left:0px;width:222px">SI2410130002</div><div class="c" style="left:222px;width:153px">2024-10-13</div><div class="c" style="left:375px;width:153px">2024-10-13</div><div class="c z" style="left:528px;width:153px">成品库</div><div class="c" style="left:681px;width:153px"></div><div class="c z" style="left:834px;width:153px">管理员</div><div class="c" style="left:987px;width:197px">2024-10-13 19:38:29</div><div class="c z" style="left:1184px;width:153px"><span class="s1">已盘库</span></div><div class="c" style="left:1337px;width:264px"><span class="a"><svg width="14" height="14" viewBox="1.5 0.2 12 12.3" style="margin-right:-0.5px"><path d="M8.8,1 L11.2,3.4 L4.6,10 L1.6,10.8 L2.4,7.6 Z" fill="#409eff"/><path d="M6,11.6 H12" stroke="#409eff" stroke-width="1.2"/></svg>导出盘库结果</span><span class="a"><svg width="12" height="13" viewBox="0.5 0 12 13"><path d="M0.6,6.5 C2.4,3.4 4.4,2.4 6.5,2.4 C8.6,2.4 10.6,3.4 12.4,6.5 C10.6,9.6 8.6,10.6 6.5,10.6 C4.4,10.6 2.4,9.6 0.6,6.5 Z" fill="#409eff"/><circle cx="6.5" cy="6.5" r="2.4" fill="#fff"/><circle cx="6.5" cy="6.5" r="1.3" fill="#409eff"/></svg>详情</span></div></div><div class="row" style="top:257px;height:51px;background:#fff"><div class="c" style="left:0px;width:222px">SI2410130001</div><div class="c" style="left:222px;width:153px">2024-10-13</div><div class="c" style="left:375px;width:153px">2024-10-13</div><div class="c z" style="left:528px;width:153px">成品库</div><div class="c" style="left:681px;width:153px"></div><div class="c z" style="left:834px;width:153px">管理员</div><div class="c" style="left:987px;width:197px">2024-10-13 19:34:00</div><div class="c z" style="left:1184px;width:153px"><span class="s1">已盘库</span></div><div class="c" style="left:1337px;width:264px"><span class="a"><svg width="14" height="14" viewBox="1.5 0.2 12 12.3" style="margin-right:-0.5px"><path d="M8.8,1 L11.2,3.4 L4.6,10 L1.6,10.8 L2.4,7.6 Z" fill="#409eff"/><path d="M6,11.6 H12" stroke="#409eff" stroke-width="1.2"/></svg>导出盘库结果</span><span class="a"><svg width="12" height="13" viewBox="0.5 0 12 13"><path d="M0.6,6.5 C2.4,3.4 4.4,2.4 6.5,2.4 C8.6,2.4 10.6,3.4 12.4,6.5 C10.6,9.6 8.6,10.6 6.5,10.6 C4.4,10.6 2.4,9.6 0.6,6.5 Z" fill="#409eff"/><circle cx="6.5" cy="6.5" r="2.4" fill="#fff"/><circle cx="6.5" cy="6.5" r="1.3" fill="#409eff"/></svg>详情</span></div></div><div class="row" style="top:308px;height:50px;background:#fafafa"><div class="c" style="left:0px;width:222px">SI2410100003</div><div class="c" style="left:222px;width:153px">2024-10-10</div><div class="c" style="left:375px;width:153px">2024-10-10</div><div class="c z" style="left:528px;width:153px">砂石库</div><div class="c z" style="left:681px;width:153px">砂石1库</div><div class="c z" style="left:834px;width:153px">管理员</div><div class="c" style="left:987px;width:197px">2024-10-10 22:38:15</div><div class="c z" style="left:1184px;width:153px"><span class="s1">已盘库</span></div><div class="c" style="left:1337px;width:264px"><span class="a"><svg width="14" height="14" viewBox="1.5 0.2 12 12.3" style="margin-right:-0.5px"><path d="M8.8,1 L11.2,3.4 L4.6,10 L1.6,10.8 L2.4,7.6 Z" fill="#409eff"/><path d="M6,11.6 H12" stroke="#409eff" stroke-width="1.2"/></svg>导出盘库结果</span><span class="a"><svg width="12" height="13" viewBox="0.5 0 12 13"><path d="M0.6,6.5 C2.4,3.4 4.4,2.4 6.5,2.4 C8.6,2.4 10.6,3.4 12.4,6.5 C10.6,9.6 8.6,10.6 6.5,10.6 C4.4,10.6 2.4,9.6 0.6,6.5 Z" fill="#409eff"/><circle cx="6.5" cy="6.5" r="2.4" fill="#fff"/><circle cx="6.5" cy="6.5" r="1.3" fill="#409eff"/></svg>详情</span></div></div><div class="row" style="top:358px;height:50px;background:#fff"><div class="c" style="left:0px;width:222px">SI2410100002</div><div class="c" style="left:222px;width:153px">2024-10-10</div><div class="c" style="left:375px;width:153px">2024-10-10</div><div class="c z" style="left:528px;width:153px">砂石库</div><div class="c z" style="left:681px;width:153px">砂石1库</div><div class="c" style="left:834px;width:153px"></div><div class="c" style="left:987px;width:197px"></div><div class="c z" style="left:1184px;width:153px"><span class="s0">未盘库</span></div><div class="c" style="left:1337px;width:264px"><span class="a"><svg width="14" height="14" viewBox="1.5 0.2 12 12.3" style="margin-right:-0.5px"><path d="M8.8,1 L11.2,3.4 L4.6,10 L1.6,10.8 L2.4,7.6 Z" fill="#409eff"/><path d="M6,11.6 H12" stroke="#409eff" stroke-width="1.2"/></svg>确认盘库结果</span><span class="a"><svg width="14" height="14" viewBox="1.5 0.2 12 12.3" style="margin-right:-0.5px"><path d="M8.8,1 L11.2,3.4 L4.6,10 L1.6,10.8 L2.4,7.6 Z" fill="#409eff"/><path d="M6,11.6 H12" stroke="#409eff" stroke-width="1.2"/></svg>导出盘库模版</span><span class="a"><svg width="10" height="11" viewBox="0.5 0 10 11"><path d="M1,3 L5.5,7.5 L10,3" stroke="#409eff" stroke-width="1" fill="none"/></svg>更多</span></div></div><div class="row" style="top:408px;height:51px;background:#f5f7fa"><div class="c" style="left:0px;width:222px">SI2410100001</div><div class="c" style="left:222px;width:153px">2024-10-10</div><div class="c" style="left:375px;width:153px">2024-10-10</div><div class="c z" style="left:528px;width:153px">成品库</div><div class="c" style="left:681px;width:153px">3</div><div class="c" style="left:834px;width:153px"></div><div class="c" style="left:987px;width:197px"></div><div class="c z" style="left:1184px;width:153px"><span class="s0">未盘库</span></div><div class="c" style="left:1337px;width:264px"><span class="a"><svg width="14" height="14" viewBox="1.5 0.2 12 12.3" style="margin-right:-0.5px"><path d="M8.8,1 L11.2,3.4 L4.6,10 L1.6,10.8 L2.4,7.6 Z" fill="#409eff"/><path d="M6,11.6 H12" stroke="#409eff" stroke-width="1.2"/></svg>确认盘库结果</span><span class="a"><svg width="14" height="14" viewBox="1.5 0.2 12 12.3" style="margin-right:-0.5px"><path d="M8.8,1 L11.2,3.4 L4.6,10 L1.6,10.8 L2.4,7.6 Z" fill="#409eff"/><path d="M6,11.6 H12" stroke="#409eff" stroke-width="1.2"/></svg>导出盘库模版</span><span class="a"><svg width="10" height="11" viewBox="0.5 0 10 11"><path d="M1,3 L5.5,7.5 L10,3" stroke="#409eff" stroke-width="1" fill="none"/></svg>更多</span></div></div><div class="row" style="top:459px;height:50px;background:#fff"><div class="c" style="left:0px;width:222px">SI2410090002</div><div class="c" style="left:222px;width:153px">2024-10-09</div><div class="c" style="left:375px;width:153px">2024-10-09</div><div class="c z" style="left:528px;width:153px">砂石库</div><div class="c z" style="left:681px;width:153px">砂石1库</div><div class="c" style="left:834px;width:153px"></div><div class="c" style="left:987px;width:197px"></div><div class="c z" style="left:1184px;width:153px"><span class="s0">未盘库</span></div><div class="c" style="left:1337px;width:264px"><span class="a"><svg width="14" height="14" viewBox="1.5 0.2 12 12.3" style="margin-right:-0.5px"><path d="M8.8,1 L11.2,3.4 L4.6,10 L1.6,10.8 L2.4,7.6 Z" fill="#409eff"/><path d="M6,11.6 H12" stroke="#409eff" stroke-width="1.2"/></svg>确认盘库结果</span><span class="a"><svg width="14" height="14" viewBox="1.5 0.2 12 12.3" style="margin-right:-0.5px"><path d="M8.8,1 L11.2,3.4 L4.6,10 L1.6,10.8 L2.4,7.6 Z" fill="#409eff"/><path d="M6,11.6 H12" stroke="#409eff" stroke-width="1.2"/></svg>导出盘库模版</span><span class="a"><svg width="10" height="11" viewBox="0.5 0 10 11"><path d="M1,3 L5.5,7.5 L10,3" stroke="#409eff" stroke-width="1" fill="none"/></svg>更多</span></div></div><div class="row" style="top:509px;height:51px;background:#fafafa"><div class="c" style="left:0px;width:222px">SI2410090001</div><div class="c" style="left:222px;width:153px">2024-10-09</div><div class="c" style="left:375px;width:153px">2024-10-09</div><div class="c z" style="left:528px;width:153px">砂石库</div><div class="c z" style="left:681px;width:153px">砂石1库</div><div class="c" style="left:834px;width:153px"></div><div class="c" style="left:987px;width:197px"></div><div class="c z" style="left:1184px;width:153px"><span class="s0">未盘库</span></div><div class="c" style="left:1337px;width:264px"><span class="a"><svg width="14" height="14" viewBox="1.5 0.2 12 12.3" style="margin-right:-0.5px"><path d="M8.8,1 L11.2,3.4 L4.6,10 L1.6,10.8 L2.4,7.6 Z" fill="#409eff"/><path d="M6,11.6 H12" stroke="#409eff" stroke-width="1.2"/></svg>确认盘库结果</span><span class="a"><svg width="14" height="14" viewBox="1.5 0.2 12 12.3" style="margin-right:-0.5px"><path d="M8.8,1 L11.2,3.4 L4.6,10 L1.6,10.8 L2.4,7.6 Z" fill="#409eff"/><path d="M6,11.6 H12" stroke="#409eff" stroke-width="1.2"/></svg>导出盘库模版</span><span class="a"><svg width="10" height="11" viewBox="0.5 0 10 11"><path d="M1,3 L5.5,7.5 L10,3" stroke="#409eff" stroke-width="1" fill="none"/></svg>更多</span></div></div></div>
<div class="pg" style="left:1232px">共 50 条</div><div class="pg" style="left:1295px;width:100px;border:1px solid #dcdfe6;border-radius:3px;background:#fff;line-height:26px;text-align:left;padding-left:19px">10条/页<svg class="abs" style="left:81px;top:10px" width="10" height="7" viewBox="0 0 10 7"><path d="M1,1 L5,5 L9,1" stroke="#a8abb2" stroke-width="1" fill="none"/></svg></div><div class="pg pb" style="left:1415px;width:59px;font-weight:normal;color:#909399">上一页</div><div class="pg pb" style="left:1484px;background:#409eff;color:#fff;">1</div><div class="pg pb" style="left:1524px;">2</div><div class="pg pb" style="left:1564px;">3</div><div class="pg pb" style="left:1604px;">4</div><div class="pg pb" style="left:1644px;">5</div><div class="pg pb" style="left:1684px;width:59px;font-weight:normal;color:#606266">下一页</div><div class="pg" style="left:1772px">前往</div><div class="pg" style="left:1802px;top:861px;width:46px;border:1px solid #dcdfe6;border-radius:3px;background:#fff;line-height:26px">1</div><div class="pg" style="left:1852px">页</div>
</body>
</html>
